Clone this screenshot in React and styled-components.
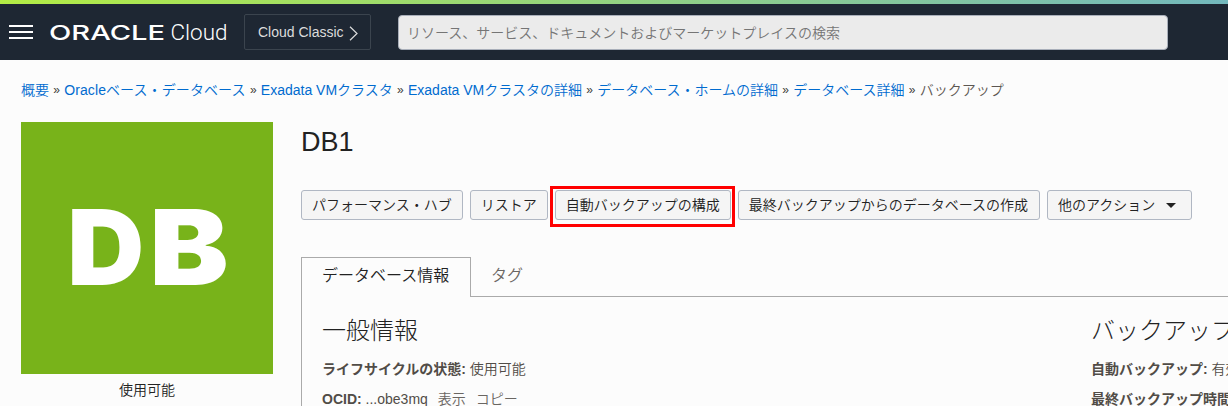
import React from "react";
import styled, { createGlobalStyle } from "styled-components";

const GlobalStyle = createGlobalStyle`
  * { box-sizing: border-box; }
  body {
    margin: 0;
    background: #fcfcfc;
    color: #514c47;
    font: 350 14px/20px "Liberation Sans", "Noto Sans CJK JP", sans-serif;
    overflow: hidden;
  }
`;

const Page = styled.div`
  height: 406px;
  overflow: hidden;
`;

const Accent = styled.div`
  height: 4px;
  background: linear-gradient(90deg, #b3ec45, #73b8bd);
`;

const Header = styled.header`
  display: flex;
  align-items: center;
  height: 56px;
  padding-left: 9px;
  background: #1e2733;
`;

const MenuButton = styled.div`
  display: flex;
  flex-direction: column;
  gap: 4px;
  width: 24px;
  margin-right: 17px;
`;

const MenuLine = styled.span`
  height: 2px;
  background: #fff;
`;

const Logo = styled.svg`
  display: block;
  flex: none;
  width: 178px;
  height: 26px;
  margin-right: 16px;
  fill: #fff;
`;

const ClassicButton = styled.div`
  display: flex;
  align-items: center;
  flex: none;
  width: 127px;
  height: 36px;
  padding-left: 13px;
  border: 1px solid #3b444e;
  border-radius: 2px;
  color: #dcdcdc;
  font-size: 14px;

  svg { margin: 2px 0 0 5px; }
`;

const Search = styled.div`
  flex: none;
  width: 770px;
  height: 35px;
  margin-left: 27px;
  padding: 0 8px;
  border: 1px solid #a9afba;
  border-radius: 4px;
  background: #ebebeb;
  color: #757575;
  line-height: 34px;
  white-space: nowrap;
`;

const Breadcrumb = styled.nav`
  display: flex;
  padding: 20px 21px 0;
  height: 62px;
  white-space: nowrap;
`;

const Crumb = styled.span`
  color: ${(p) => (p.$current ? "#5c5752" : "#006bcf")};
  letter-spacing: ${(p) => p.$tracking || 0}px;
`;

const Separator = styled.span`
  width: 15.2px;
  color: #403c38;
  font-size: 12px;
  font-weight: 400;
  line-height: 21px;
  text-align: center;
`;

const Body = styled.div`
  display: flex;
  padding-left: 21px;
`;

const Aside = styled.aside`
  flex: none;
  width: 252px;
  margin-right: 28px;
  color: #222;
  text-align: center;
`;

const Tile = styled.svg`
  display: block;
  width: 252px;
  height: 252px;
  margin-bottom: 6px;
  background: #78b31a;
  fill: #fff;
  font: 900 104px/1 "Inter", sans-serif;
`;

const Content = styled.main`
  flex: 1;
  min-width: 0;
`;

const Title = styled.h1`
  margin: 0 0 28px;
  color: #222;
  font-size: 27px;
  font-weight: 400;
  line-height: 40px;
`;

const Actions = styled.div`
  display: flex;
  gap: 7px;
`;

const Button = styled.button`
  position: relative;
  display: flex;
  align-items: center;
  flex: none;
  height: 30px;
  padding: 0 ${(p) => p.$padRight || 10}px 0 10px;
  border: 1px solid #b0b7c3;
  border-radius: 3px;
  background: #f5f5f5;
  color: #222;
  font: inherit;
  white-space: nowrap;

  svg { margin: 1px 4px 0 11px; }
`;

const Highlight = styled.span`
  position: absolute;
  inset: -5px -5px -8px -6px;
  border: 3px solid #f00;
`;

const Tabs = styled.div`
  display: flex;
  height: 40px;
  margin-top: 37px;
  border-bottom: 1px solid #aaa;
`;

const Tab = styled.div`
  height: 40px;
  padding: 0 20px 0 ${(p) => (p.$active ? 20 : 19)}px;
  min-width: ${(p) => (p.$active ? 170 : 0)}px;
  border: 1px solid ${(p) => (p.$active ? "#aaa" : "transparent")};
  border-bottom: 0;
  background: ${(p) => (p.$active ? "#fcfcfc" : "transparent")};
  color: ${(p) => (p.$active ? "#222" : "#6a6662")};
  font-size: 16px;
  line-height: 36px;
`;

const Panel = styled.div`
  display: flex;
  height: 109px;
  padding: 14px 0 0 20px;
  border-left: 1px solid #aaa;
  white-space: nowrap;
`;

const Column = styled.section`
  flex: none;
  width: 769px;
`;

const Heading = styled.h2`
  margin: 0 0 8px;
  color: #222;
  font-size: 24px;
  font-weight: 300;
  line-height: 40px;
`;

const Field = styled.div`
  height: 30px;
  line-height: 20px;

  b { font-weight: 700; }
`;

const Action = styled.span`
  margin-left: 10px;
  color: #6a6662;
`;

const CRUMBS = [
  { label: "概要" },
  { label: "Oracleベース・データベース", tracking: 0.1 },
  { label: "Exadata VMクラスタ" },
  { label: "Exadata VMクラスタの詳細" },
  { label: "データベース・ホームの詳細" },
  { label: "データベース詳細" },
];

export default function App() {
  return (
    <Page>
      <GlobalStyle />
      <Accent />
      <Header>
        <MenuButton>
          <MenuLine />
          <MenuLine />
          <MenuLine />
        </MenuButton>
        <Logo viewBox="0 0 178 26">
          <text x="-1" y="21" fontFamily="Inter" fontWeight="500" fontSize="20.5" textLength="116" lengthAdjust="spacingAndGlyphs">ORACLE</text>
          <text x="120.5" y="21" fontFamily="Roboto" fontWeight="300" fontSize="22" textLength="57" lengthAdjust="spacingAndGlyphs">Cloud</text>
        </Logo>
        <ClassicButton>
          Cloud Classic
          <svg width="9" height="15" viewBox="0 0 9 15" fill="none" stroke="#dcdcdc" strokeWidth="1.2">
            <path d="M1 .8l7 6.7-7 6.7" />
          </svg>
        </ClassicButton>
        <Search>リソース、サービス、ドキュメントおよびマーケットプレイスの検索</Search>
      </Header>
      <Breadcrumb>
        {CRUMBS.map((c) => (
          <React.Fragment key={c.label}>
            <Crumb $tracking={c.tracking}>{c.label}</Crumb>
            <Separator>»</Separator>
          </React.Fragment>
        ))}
        <Crumb $current>バックアップ</Crumb>
      </Breadcrumb>
      <Body>
        <Aside>
          <Tile viewBox="0 0 252 252">
            <text x="46.3" y="163" textLength="77" lengthAdjust="spacingAndGlyphs">D</text>
            <text x="128.5" y="163" textLength="79" lengthAdjust="spacingAndGlyphs">B</text>
          </Tile>
          使用可能
        </Aside>
        <Content>
          <Title>DB1</Title>
          <Actions>
            <Button>パフォーマンス・ハブ</Button>
            <Button>リストア</Button>
            <Button>
              自動バックアップの構成
              <Highlight />
            </Button>
            <Button $padRight={11}>最終バックアップからのデータベースの作成</Button>
            <Button $padRight={11}>
              他のアクション
              <svg width="10" height="5" viewBox="0 0 10 5" fill="#222">
                <path d="M0 0h10L5 5z" />
              </svg>
            </Button>
          </Actions>
          <Tabs>
            <Tab $active>データベース情報</Tab>
            <Tab>タグ</Tab>
          </Tabs>
          <Panel>
            <Column>
              <Heading>一般情報</Heading>
              <Field><b>ライフサイクルの状態:</b> 使用可能</Field>
              <Field>
                <b>OCID:</b> ...obe3mq<Action>表示</Action><Action>コピー</Action>
              </Field>
            </Column>
            <Column>
              <Heading>バックアップ</Heading>
              <Field><b>自動バックアップ:</b> 有効</Field>
              <Field><b>最終バックアップ時間:</b></Field>
            </Column>
          </Panel>
        </Content>
      </Body>
    </Page>
  );
}
